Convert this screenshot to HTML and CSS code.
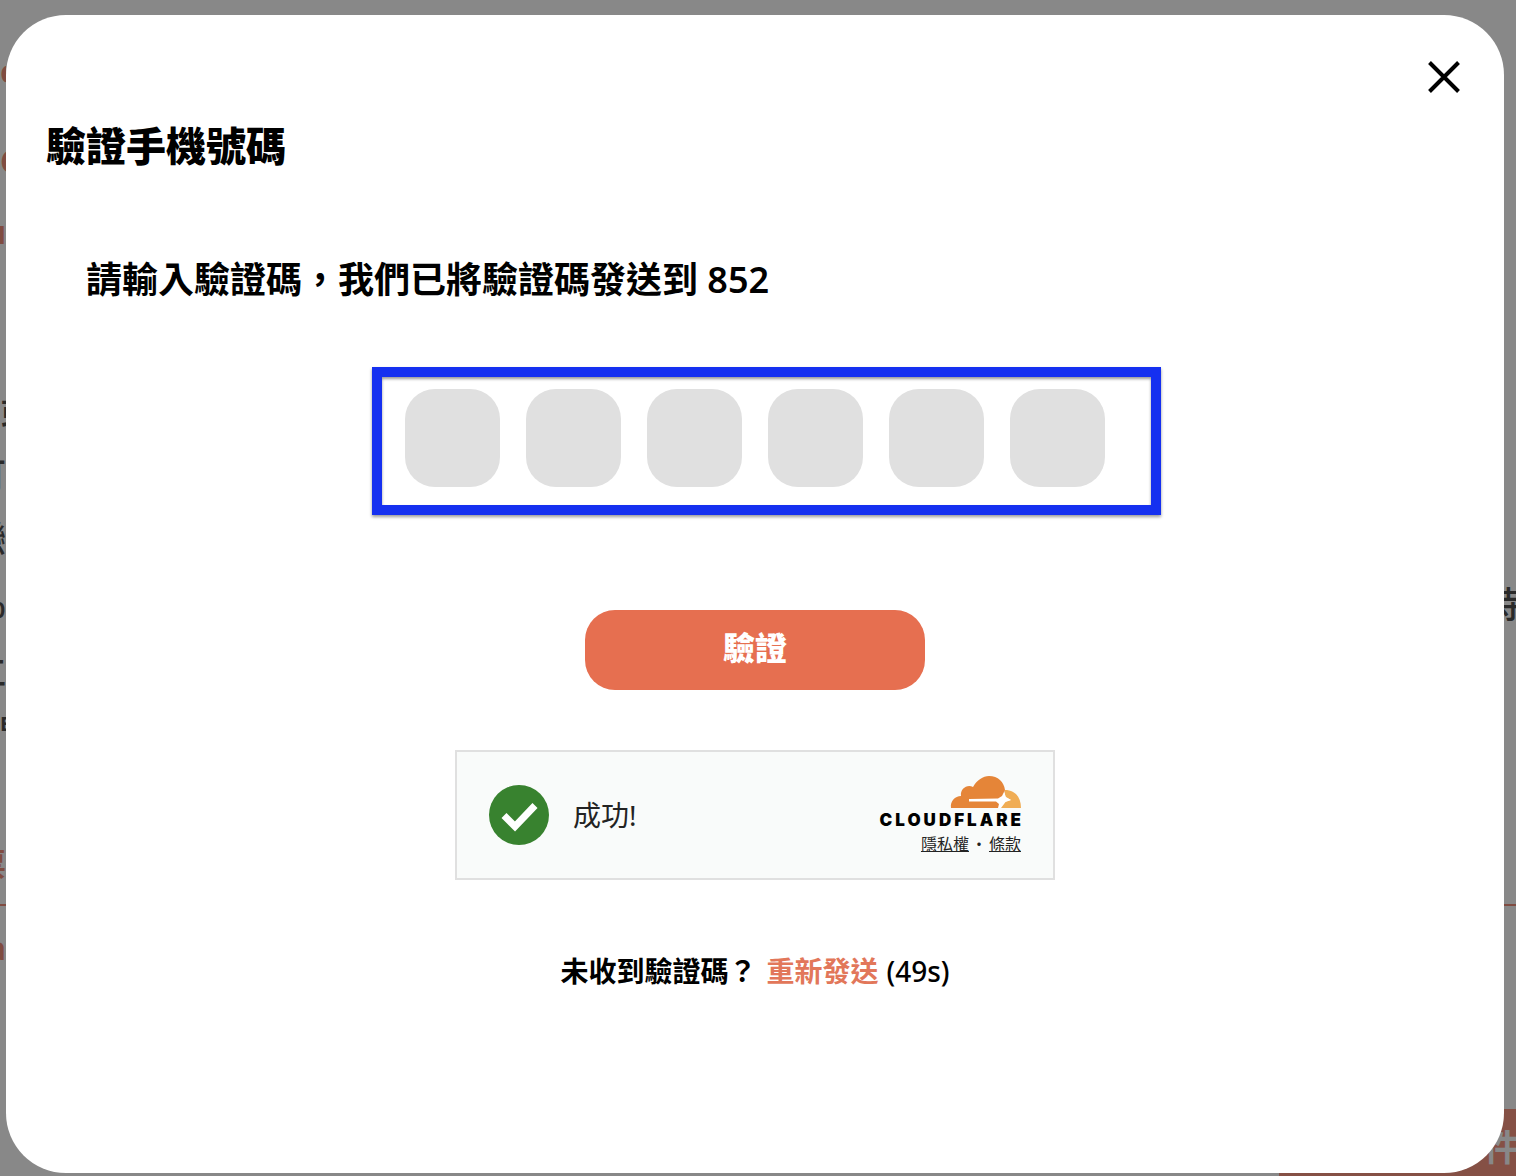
FILE: index.html
```html
<!DOCTYPE html>
<html lang="zh-Hant">
<head>
<meta charset="utf-8">
<meta name="viewport" content="width=device-width, initial-scale=1">
<title>驗證手機號碼</title>
<link rel="stylesheet" href="styles.css">
</head>
<body>
<div class="stage">
  <div class="page" aria-hidden="true">
    <span class="line accent r1">c</span>
    <span class="line accent r2">C</span>
    <span class="line accent end r3">u</span>
    <span class="line r4">或</span>
    <span class="line end r5">可</span>
    <span class="line end r6">戀</span>
    <span class="line end r7">%</span>
    <span class="line right r7">特</span>
    <span class="line end r8">仁</span>
    <span class="line small r9">E</span>
    <span class="line accent end r10">票</span>
    <span class="rule"></span>
    <span class="line accent end r12">a</span>
    <span class="page-action">件</span>
  </div>
  <div class="backdrop"></div>
  <main class="modal" role="dialog" aria-labelledby="title">
    <button class="close" type="button" aria-label="關閉">
      <svg viewBox="0 0 40 40" width="40" height="40"><path d="M5.500 5.500 34.500 34.500M34.500 5.500 5.500 34.500" fill="none" stroke="#000" stroke-width="4"/></svg>
    </button>
    <h1 class="title" id="title">驗證手機號碼</h1>
    <form class="form">
      <p class="prompt" id="prompt">請輸入驗證碼，我們已將驗證碼發送到 852</p>
      <div class="code" role="group" aria-labelledby="prompt">
        <input class="digit" type="text" inputmode="numeric" maxlength="1" aria-label="第 1 位">
        <input class="digit" type="text" inputmode="numeric" maxlength="1" aria-label="第 2 位">
        <input class="digit" type="text" inputmode="numeric" maxlength="1" aria-label="第 3 位">
        <input class="digit" type="text" inputmode="numeric" maxlength="1" aria-label="第 4 位">
        <input class="digit" type="text" inputmode="numeric" maxlength="1" aria-label="第 5 位">
        <input class="digit" type="text" inputmode="numeric" maxlength="1" aria-label="第 6 位">
      </div>
      <button class="submit" type="submit">驗證</button>
      <section class="turnstile">
        <svg class="tick" viewBox="0 0 60 60" width="60" height="60"><circle cx="30" cy="30" r="30" fill="#38822f"/><path d="M15 30.5 26 41.5 46 20.5" fill="none" stroke="#fff" stroke-width="7"/></svg>
        <span class="status">成功!</span>
        <div class="brand">
          <svg class="cloud" viewBox="0 0 71 34" width="71" height="34">
            <path d="M1 33C0 26 5 21 11 21C10 14 17 9 23 12C27 5 33 1 39 1C48 1 54 7 55 15L53 23 58 25 53 27 49 33Z" fill="#e58538"/>
            <path d="M55 15C65 15 71 22 71 33H50L54 27 61 25 55 22Z" fill="#f0ad55"/>
            <path d="M19 24 48 23.500 52 21 54 17 56 22 61 25 55.500 27 51 33H48L49 29 46 26.500H19Z" fill="#fff"/>
          </svg>
          <span class="wordmark">CLOUDFLARE</span>
          <span class="legal"><a href="#privacy">隱私權</a><span>・</span><a href="#terms">條款</a></span>
        </div>
      </section>
      <p class="resend"><span>未收到驗證碼？</span><a href="#resend">重新發送</a><span class="countdown">(49s)</span></p>
    </form>
  </main>
</div>
</body>
</html>
```
FILE: styles.css
```css
* { box-sizing: border-box; }

body {
  margin: 0;
  font-family: "Noto Sans", "Noto Sans CJK TC", sans-serif;
  color: #000;
}

.stage {
  display: grid;
  grid-template-columns: minmax(0, 1fr);
  min-height: 100vh;
  background: #fff;
}

.page, .backdrop, .modal { grid-area: 1 / 1; }

.backdrop { background: rgba(0, 0, 0, 0.467); }

/* Page behind the dialog */
.page {
  display: grid;
  grid-template-columns: 6px 1fr 225px 12px;
  grid-template-rows: 51px 40px 50px 40px 31px 40px 141px 40px 23px 40px 24px 40px 25px 40px 27px 40px 12px 40px 100px 40px 20px 2px 22px 40px 141px 1fr;
  overflow: hidden;
  color: #505050;
}

.line {
  display: flex;
  grid-column: 1;
  overflow: hidden;
  font-size: 36px;
  font-weight: 500;
  line-height: 40px;
}

.end { justify-content: flex-end; }
.accent { color: #f08f7a; font-size: 32px; font-weight: 700; }
.small { font-size: 20px; font-weight: 700; }
.right { grid-column: 4; justify-content: flex-end; margin-right: -4px; }

.r1 { grid-row: 2; }
.r2 { grid-row: 4; }
.r3 { grid-row: 6; }
.r4 { grid-row: 8; }
.r5 { grid-row: 10; }
.r6 { grid-row: 12; }
.r7 { grid-row: 14; }
.r8 { grid-row: 16; }
.r9 { grid-row: 18; }
.r10 { grid-row: 20; }
.r12 { grid-row: 24; }

.rule { grid-area: 22 / 1 / 23 / -1; background: #f08f7a; }

.page-action {
  display: flex;
  grid-area: 26 / 3 / 27 / -1;
  align-items: flex-end;
  justify-content: flex-end;
  margin-right: -4px;
  padding-bottom: 8px;
  background: #f99682;
  color: #fff;
  font-size: 36px;
  font-weight: 700;
  line-height: 40px;
}

/* Dialog */
.modal {
  display: flex;
  flex-direction: column;
  margin: 15px 12px 3px 6px;
  padding: 42px 40px;
  border-radius: 60px;
  background: #fff;
}

.close {
  align-self: flex-end;
  width: 40px;
  height: 40px;
  padding: 0;
  border: 0;
  background: none;
  cursor: pointer;
}

.close svg, .tick, .cloud { display: block; }

.title {
  margin: 19px 0 0;
  font-size: 40px;
  font-weight: 900;
  line-height: 60px;
}

.form {
  display: flex;
  flex-direction: column;
  align-items: center;
}

.prompt {
  align-self: stretch;
  margin: 76px 40px 0;
  font-size: 36px;
  font-weight: 600;
  line-height: 56px;
}

.code {
  display: flex;
  gap: 26px;
  margin: 59px 0 0 23px;
  padding: 12px 46px 18px 23px;
  border: 10px solid #1530f0;
  box-shadow: 0 2px 3px rgba(0, 0, 0, 0.4), inset 0 2px 3px rgba(0, 0, 0, 0.4);
}

.digit {
  width: 95px;
  height: 98px;
  padding: 0;
  border: 0;
  border-radius: 30px;
  background: #e0e0e0;
  font: inherit;
  font-size: 36px;
  text-align: center;
}

.submit {
  width: 340px;
  height: 80px;
  margin-top: 95px;
  padding: 0 0 8px;
  border: 0;
  border-radius: 30px;
  background: #e66f50;
  color: #fff;
  font: inherit;
  font-size: 32px;
  font-weight: 900;
  cursor: pointer;
}

.turnstile {
  display: flex;
  align-items: center;
  width: 600px;
  height: 130px;
  margin-top: 60px;
  padding: 0 32px;
  border: 2px solid #e0e0e0;
  background: #f9fbfa;
  color: #232323;
}

.status {
  margin-left: 24px;
  font-size: 28px;
  line-height: 40px;
}

.brand {
  display: flex;
  flex-direction: column;
  align-items: flex-end;
  margin-left: auto;
  padding-top: 2px;
}

.wordmark {
  margin-right: -3px;
  color: #000;
  font-family: Inter, sans-serif;
  font-size: 17px;
  font-weight: 900;
  line-height: 22px;
  letter-spacing: 3px;
}

.legal {
  display: flex;
  gap: 2px;
  font-size: 16px;
  line-height: 26px;
}

.legal a { color: inherit; }

.resend {
  display: flex;
  margin: 71px 0 0;
  font-size: 28px;
  font-weight: 600;
  line-height: 40px;
}

.resend a {
  margin: 0 8px 0 10px;
  color: #e2775a;
  text-decoration: none;
}

.countdown { font-weight: 500; }
```
